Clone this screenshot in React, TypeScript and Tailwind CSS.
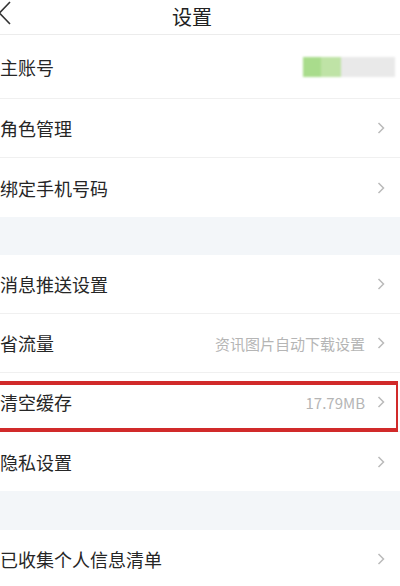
import type { ReactNode } from "react";

const font = { fontFamily: '"Noto Sans CJK SC", "Noto Sans", sans-serif' };

function Chevron() {
  return (
    <svg width="9" height="14" viewBox="0 0 9 14" className="flex-shrink-0">
      <polyline points="1.5,2 6.5,7 1.5,12" fill="none" stroke="#bababa" strokeWidth="1.5" />
    </svg>
  );
}

interface RowProps {
  label: string;
  value?: ReactNode;
  arrow?: boolean;
  className?: string;
  children?: ReactNode;
}

function Row({ label, value, arrow = true, className = "h-[59px]", children }: RowProps) {
  return (
    <div className={`relative flex items-center justify-between border-b border-[#f0f0f0] bg-white pr-[14px] ${className}`}>
      <span className="text-[18px] leading-none text-[#262626]">{label}</span>
      <div className="flex items-center gap-[12px]">
        {value}
        {arrow && <Chevron />}
      </div>
      {children}
    </div>
  );
}

export default function App() {
  return (
    <div className="h-[586px] w-[400px] overflow-hidden bg-white" style={font}>
      {/* header */}
      <header className="relative flex h-[35px] items-center justify-center border-b border-[#ececec] pr-[16px]">
        <svg width="13" height="24" viewBox="0 0 13 24" className="absolute -left-[2px] top-[1px]">
          <polyline points="12,1 1.5,12 12,23" fill="none" stroke="#333" strokeWidth="1.6" />
        </svg>
        <h1 className="text-[20px] leading-none text-[#222]">设置</h1>
      </header>

      <Row
        label="主账号"
        arrow={false}
        className="h-[64px]"
        value={
          <div className="mr-[-9px] flex h-[20px] w-[92px] overflow-hidden blur-[1px]">
            <div className="w-[18px] bg-[#a9dc8c]" />
            <div className="w-[20px] bg-[#bfe3a6]" />
            <div className="flex-1 bg-[#e9e9e9]" />
          </div>
        }
      />
      <Row label="角色管理" />
      <Row label="绑定手机号码" className="h-[59px] border-b-0" />

      <div className="h-[38px] bg-[#f3f6f9]" />

      <Row label="消息推送设置" />
      <Row
        label="省流量"
        value={<span className="text-[15px] leading-none text-[#b5b5b5]">资讯图片自动下载设置</span>}
      />
      <Row
        label="清空缓存"
        value={<span className="text-[15px] leading-none text-[#b5b5b5]">17.79MB</span>}
      >
        {/* annotation box */}
        <div className="pointer-events-none absolute -left-[4px] right-[2px] top-[8px] -bottom-[1px] border-y-4 border-r-2 border-[#d12a2a]" />
      </Row>
      <Row label="隐私设置" className="h-[59px] border-b-0" />

      <div className="h-[39px] bg-[#f3f6f9]" />

      <Row label="已收集个人信息清单" />
    </div>
  );
}
